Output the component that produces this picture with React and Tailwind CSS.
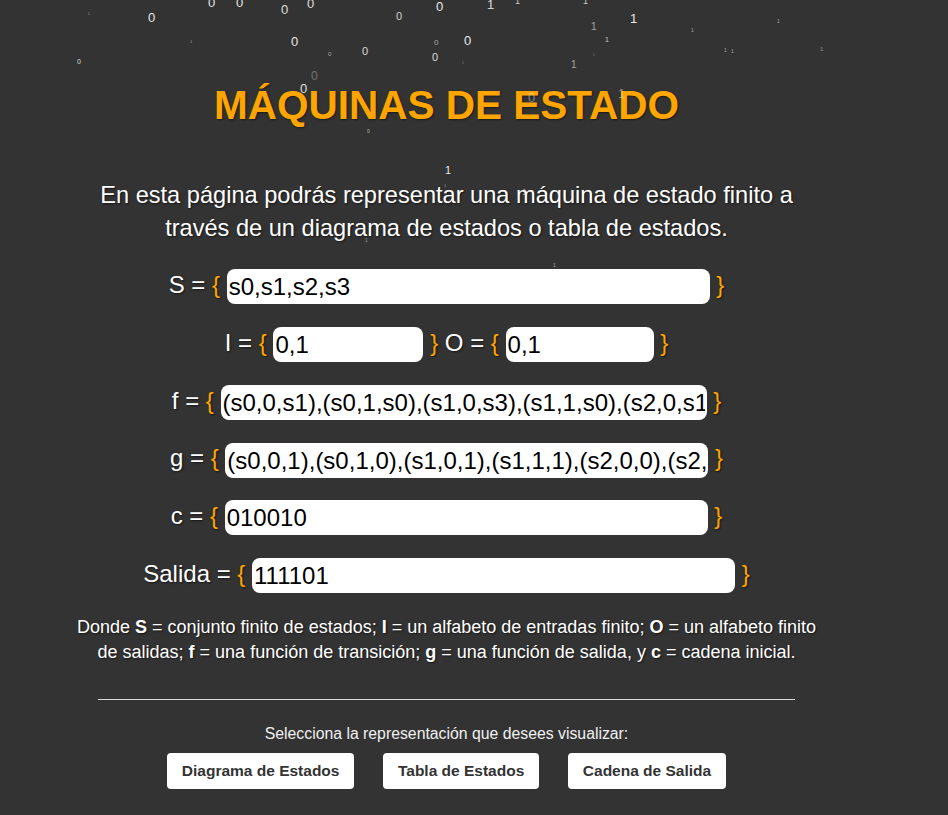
import React from "react";

const digits = [
  // x, centerY, char, size, opacity
  [148, 17, "0", 13, 1],
  [208, 2, "0", 13, 1],
  [236, 2, "0", 13, 1],
  [281, 9, "0", 13, 0.95],
  [307, 3, "0", 13, 0.95],
  [396, 16, "0", 11, 0.85],
  [436, 6, "0", 13, 1],
  [487, 4, "1", 13, 0.9],
  [515, 1, "1", 9, 0.8],
  [583, 1, "1", 9, 0.8],
  [630, 18, "1", 13, 1],
  [591, 27, "1", 10, 0.6],
  [291, 41, "0", 13, 1],
  [362, 51, "0", 11, 0.9],
  [464, 40, "0", 13, 1],
  [434, 43, "0", 8, 0.6],
  [432, 57, "0", 11, 0.9],
  [605, 39, "1", 7, 0.8],
  [571, 65, "1", 10, 0.6],
  [77, 61, "0", 7, 0.9],
  [328, 54, "0", 6, 0.6],
  [311, 76, "0", 12, 0.35],
  [300, 88, "0", 13, 0.95],
  [528, 97, "0", 13, 0.45],
  [618, 93, "1", 13, 0.5],
  [691, 30, "1", 5, 0.6],
  [777, 21, "1", 5, 0.6],
  [724, 50, "1", 5, 0.6],
  [731, 51, "1", 5, 0.6],
  [820, 49, "1", 6, 0.5],
  [88, 14, "1", 3, 0.6],
  [190, 42, "1", 4, 0.5],
  [462, 63, "1", 3, 0.5],
  [593, 55, "1", 3, 0.5],
  [367, 131, "0", 5, 0.7],
  [445, 170, "1", 11, 1],
  [444, 186, "1", 4, 0.5],
  [522, 192, "1", 9, 0.6],
  [365, 240, "1", 5, 0.5],
  [553, 265, "1", 5, 0.6],
];

const Brace = ({ children }) => (
  <span className="text-[#ffa500]">{children}</span>
);

const Field = ({ value, w = "w-[483px]" }) => (
  <input
    readOnly
    value={value}
    className={`${w} inline-block h-[35px] rounded-[8px] bg-white px-[2px] align-middle text-[24px] text-black outline-none font-['Liberation_Sans',Arial,sans-serif]`}
  />
);

const Row = ({ children }) => (
  <div className="h-[35px] whitespace-nowrap text-center text-[24px] leading-[35px] text-white [text-shadow:1px_1px_2px_rgba(0,0,0,0.6)]">
    {children}
  </div>
);

export default function App() {
  return (
    <div className="relative min-h-screen w-full overflow-hidden bg-[#333333] font-['Liberation_Sans',Arial,sans-serif]">
      <div className="ml-[98px] w-[697px] pt-[82px]">
        <h1 className="whitespace-nowrap text-center text-[40.5px] font-bold leading-[46px] text-[#ffa500] [text-shadow:1px_1px_2px_rgba(0,0,0,0.5)]">
          MÁQUINAS DE ESTADO
        </h1>
        <p className="mt-[51px] text-center text-[23.6px] leading-[33px] text-white [text-shadow:1px_1px_2px_rgba(0,0,0,0.6)]">
          <span className="block whitespace-nowrap">
            En esta página podrás representar una máquina de estado finito a
          </span>
          <span className="block whitespace-nowrap">
            través de un diagrama de estados o tabla de estados.
          </span>
        </p>

        <div className="mt-[22px] flex flex-col gap-[22.8px]">
          <Row>
            S = <Brace>{"{"}</Brace> <Field value="s0,s1,s2,s3" /> <Brace>{"}"}</Brace>
          </Row>
          <Row>
            I = <Brace>{"{"}</Brace> <Field value="0,1" w="w-[150px]" /> <Brace>{"}"}</Brace> O ={" "}
            <Brace>{"{"}</Brace> <Field value="0,1" w="w-[148px]" /> <Brace>{"}"}</Brace>
          </Row>
          <Row>
            f = <Brace>{"{"}</Brace>{" "}
            <Field
              w="w-[486px]"
              value="(s0,0,s1),(s0,1,s0),(s1,0,s3),(s1,1,s0),(s2,0,s1),(s2,1,s2),(s3,0,s2),(s3,1,s0)"
            />{" "}
            <Brace>{"}"}</Brace>
          </Row>
          <Row>
            g = <Brace>{"{"}</Brace>{" "}
            <Field value="(s0,0,1),(s0,1,0),(s1,0,1),(s1,1,1),(s2,0,0),(s2,1,1),(s3,0,0),(s3,1,0)" />{" "}
            <Brace>{"}"}</Brace>
          </Row>
          <Row>
            c = <Brace>{"{"}</Brace> <Field value="010010" /> <Brace>{"}"}</Brace>
          </Row>
          <Row>
            Salida = <Brace>{"{"}</Brace> <Field value="111101" /> <Brace>{"}"}</Brace>
          </Row>
        </div>

        <div className="mt-[24px] flex flex-col items-center text-[18px] leading-[25px] text-white [text-shadow:1px_1px_2px_rgba(0,0,0,0.6)]">
          <span className="whitespace-nowrap">
            Donde <b>S</b> = conjunto finito de estados; <b>I</b> = un alfabeto de entradas finito; <b>O</b> = un alfabeto finito
          </span>
          <span className="whitespace-nowrap">
            de salidas; <b>f</b> = una función de transición; <b>g</b> = una función de salida, y <b>c</b> = cadena inicial.
          </span>
        </div>

        <div className="mt-[34px] h-px w-full bg-[#d8d8d8]" />

        <p className="mt-[25px] text-center text-[15.8px] leading-[18px] text-[#f0f0f0]">
          Selecciona la representación que desees visualizar:
        </p>

        <div className="mt-[10px] flex justify-center gap-[29px]">
          <button className="h-[36px] rounded-[4px] bg-white px-[15px] text-[15.5px] font-bold text-[#333]">
            Diagrama de Estados
          </button>
          <button className="h-[36px] rounded-[4px] bg-white px-[14.5px] text-[15.5px] font-bold text-[#333]">
            Tabla de Estados
          </button>
          <button className="h-[36px] rounded-[4px] bg-white px-[15px] text-[15.5px] font-bold text-[#333]">
            Cadena de Salida
          </button>
        </div>
      </div>

      <div className="pointer-events-none absolute inset-0">
        {digits.map(([x, y, c, s, o], i) => (
          <span
            key={i}
            className="absolute leading-none text-[#e8e8e8] font-['Liberation_Sans',Arial,sans-serif]"
            style={{ left: x, top: y - s / 2, fontSize: s, opacity: o }}
          >
            {c}
          </span>
        ))}
      </div>
    </div>
  );
}
